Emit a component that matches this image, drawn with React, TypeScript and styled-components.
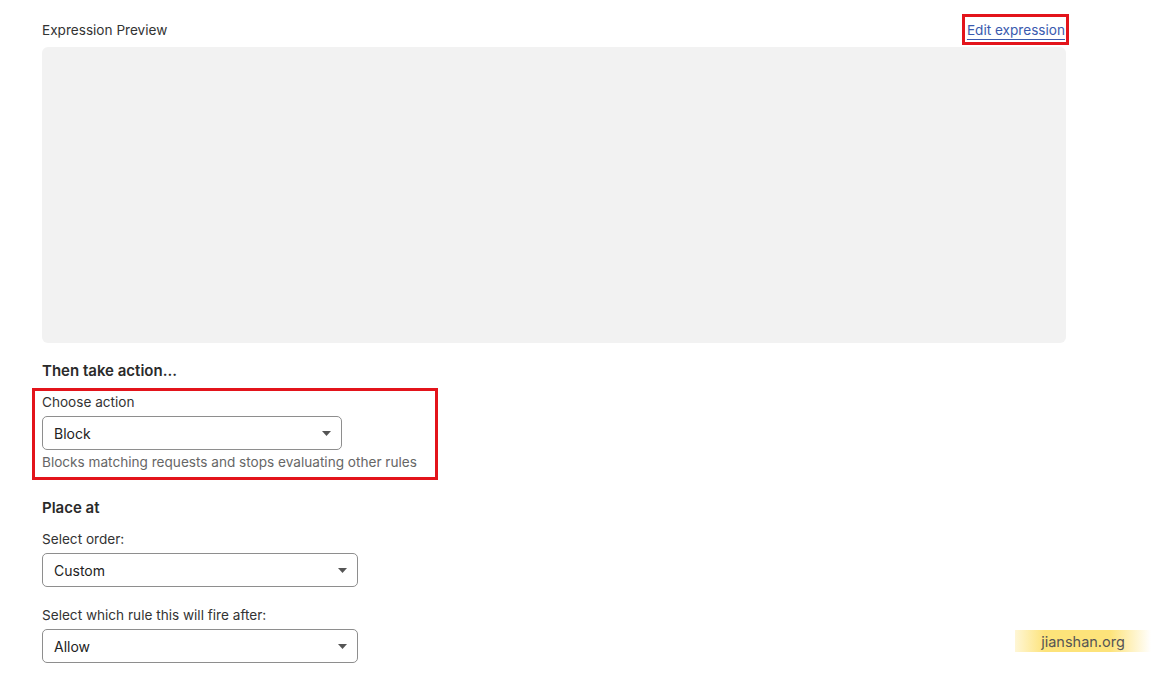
import styled, { createGlobalStyle } from "styled-components";

const GlobalStyle = createGlobalStyle`
  html, body {
    margin: 0;
    padding: 0;
    background: #ffffff;
    font-family: Inter, "Noto Sans", "Liberation Sans", sans-serif;
    color: #313131;
  }
`;

const Page = styled.div`
  position: relative;
  width: 1155px;
  height: 675px;
  box-sizing: border-box;
  padding: 13px 0 0 42px;
  overflow: hidden;
`;

const Main = styled.div`
  width: 1024px;
  display: flex;
  flex-direction: column;
  align-items: flex-start;
`;

const HeaderRow = styled.div`
  width: 100%;
  height: 33px;
  display: flex;
  align-items: center;
  justify-content: space-between;
`;

const Label = styled.div<{ $gap?: number }>`
  font-size: 13.6px;
  line-height: 18px;
  color: #333;
  margin-bottom: ${p => p.$gap ?? 5}px;
`;

const Highlight = styled.div`
  border: 3px solid #e3141b;
`;

const LinkBox = styled(Highlight)`
  height: 31px;
  box-sizing: border-box;
  display: flex;
  align-items: center;
  padding: 0 1px 0 2px;
  margin-right: -3px;
`;

const EditLink = styled.a`
  font-size: 13.6px;
  line-height: 18px;
  color: #3a5aae;
  text-decoration: underline;
  text-underline-offset: 4px;
  cursor: pointer;
`;

const Preview = styled.div`
  width: 100%;
  height: 296px;
  margin-top: 1px;
  background: #f2f2f2;
  border-radius: 6px;
`;

const Heading = styled.h3<{ $top: number }>`
  margin: ${p => p.$top}px 0 0;
  font-size: 15px;
  line-height: 20px;
  font-weight: 600;
  color: #2a2a2a;
`;

const ActionBox = styled(Highlight)`
  margin: 7px 0 0 -10px;
  padding: 2px 18px 6px 7px;
`;

const Select = styled.div<{ $width: number }>`
  width: ${p => p.$width}px;
  height: 34px;
  box-sizing: border-box;
  border: 1px solid #8e8e8e;
  border-radius: 5px;
  display: flex;
  align-items: center;
  justify-content: space-between;
  padding: 0 10px 0 11px;
  font-size: 14px;
  color: #222;
  background: #fff;
`;

const Helper = styled.div`
  margin-top: 3px;
  font-size: 13.6px;
  line-height: 18px;
  color: #666;
`;

const Field = styled.div<{ $top: number }>`
  margin-top: ${p => p.$top}px;
`;

const Watermark = styled.div`
  position: absolute;
  left: 1015px;
  top: 630px;
  width: 136px;
  height: 22px;
  display: flex;
  align-items: center;
  justify-content: center;
  font-size: 14.5px;
  color: #555;
  background: linear-gradient(
    90deg,
    rgba(253, 226, 120, 0.3) 0%,
    #fde37a 22%,
    #fde37a 70%,
    rgba(253, 226, 120, 0) 100%
  );
`;

function Caret() {
  return (
    <svg width="9" height="5" viewBox="0 0 9 5">
      <path d="M0 0 H9 L4.5 5 Z" fill="#555" />
    </svg>
  );
}

function Dropdown({ value, width }: { value: string; width: number }) {
  return (
    <Select $width={width}>
      <span>{value}</span>
      <Caret />
    </Select>
  );
}

export default function App() {
  return (
    <Page>
      <GlobalStyle />
      <Main>
        <HeaderRow>
          <Label $gap={0}>Expression Preview</Label>
          <LinkBox>
            <EditLink>Edit expression</EditLink>
          </LinkBox>
        </HeaderRow>
        <Preview />

        <Heading $top={18}>Then take action...</Heading>
        <ActionBox>
          <Label>Choose action</Label>
          <Dropdown value="Block" width={300} />
          <Helper>Blocks matching requests and stops evaluating other rules</Helper>
        </ActionBox>

        <Heading $top={18}>Place at</Heading>
        <Field $top={12}>
          <Label>Select order:</Label>
          <Dropdown value="Custom" width={316} />
        </Field>
        <Field $top={19}>
          <Label>Select which rule this will fire after:</Label>
          <Dropdown value="Allow" width={316} />
        </Field>
      </Main>
      <Watermark>jianshan.org</Watermark>
    </Page>
  );
}
